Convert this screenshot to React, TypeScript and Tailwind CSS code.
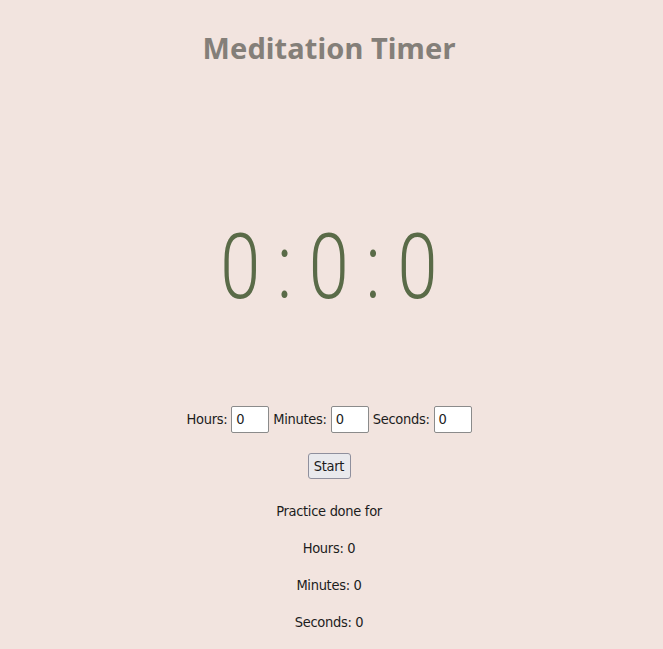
import React from "react";

export default function App() {
  const body = { fontFamily: '"DejaVu Sans Condensed", "Liberation Sans", sans-serif' };
  return (
    <div className="min-h-screen w-full bg-[#f2e4df] flex flex-col items-center pr-[5px] text-[14.5px] tracking-[-0.3px] text-[#1c1c1c]" style={body}>
      <h1
        className="mt-[30px] h-[36px] leading-[36px] text-[29px] font-bold text-[#847f79] tracking-[0.1px]"
        style={{ fontFamily: '"Noto Sans", Lato, sans-serif' }}
      >
        Meditation Timer
      </h1>
      <div
        className="mt-[152px] h-[100px] leading-[100px] flex items-center justify-center text-[#5a6b48] text-[90px] tracking-normal scale-x-[0.8]"
        style={{ fontFamily: 'Roboto, sans-serif', fontWeight: 300 }}
      >
        <span>0</span>
        <span className="mx-[21px]">:</span>
        <span>0</span>
        <span className="mx-[21px]">:</span>
        <span>0</span>
      </div>
      <div className="mt-[88px] flex items-center gap-[4px] h-[27px]">
        <span>Hours:</span>
        <div className="w-[38px] h-[27px] bg-white border border-[#8b8b8b] rounded-[2px] pl-[4px] leading-[25px]">0</div>
        <span>Minutes:</span>
        <div className="w-[38px] h-[27px] bg-white border border-[#8b8b8b] rounded-[2px] pl-[4px] leading-[25px]">0</div>
        <span>Seconds:</span>
        <div className="w-[38px] h-[27px] bg-white border border-[#8b8b8b] rounded-[2px] pl-[4px] leading-[25px]">0</div>
      </div>
      <button className="mt-[20px] w-[43px] h-[26px] bg-[#e9e9ed] border border-[#8f8f9d] rounded-[3px] leading-[24px] text-[#1c1c1c]">
        Start
      </button>
      <p className="mt-[22px] leading-[21px]">Practice done for</p>
      <p className="mt-[16px] leading-[21px]">Hours: 0</p>
      <p className="mt-[16px] leading-[21px]">Minutes: 0</p>
      <p className="mt-[16px] leading-[21px]">Seconds: 0</p>
    </div>
  );
}
